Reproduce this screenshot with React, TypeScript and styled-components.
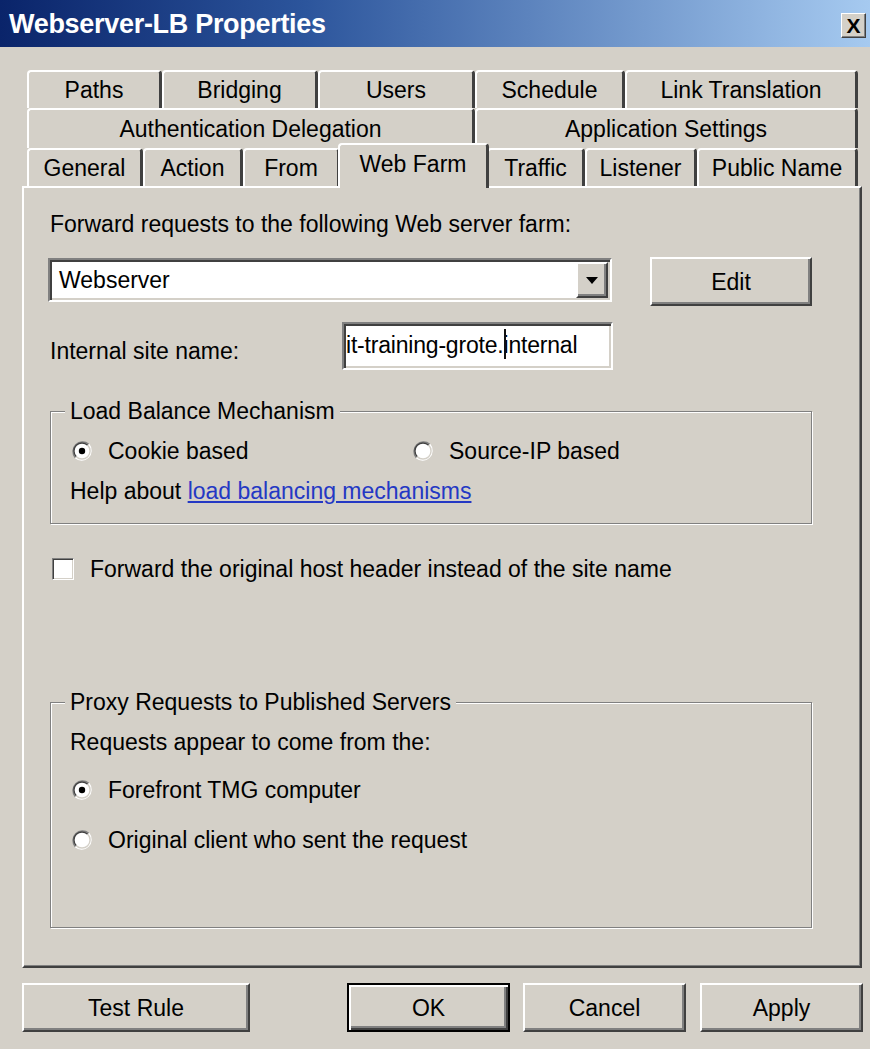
import React from "react";
import styled, { createGlobalStyle, css } from "styled-components";

const GlobalStyle = createGlobalStyle`
  html, body {
    margin: 0;
    padding: 0;
    background: #d4d0c8;
  }
  * { box-sizing: border-box; }
`;

const FACE = "#d4d0c8";
const SHADOW = "#808080";
const DARK = "#404040";

const Window = styled.div`
  width: 870px;
  height: 1049px;
  background: ${FACE};
  display: flex;
  flex-direction: column;
  font-family: "Liberation Sans", Arial, sans-serif;
  font-size: 23px;
  line-height: 26px;
  color: #000;
  overflow: hidden;
`;

const TitleBar = styled.div`
  height: 47px;
  flex: none;
  display: flex;
  align-items: center;
  justify-content: space-between;
  padding: 0 4px 0 9px;
  background: linear-gradient(90deg, #0a246a 0%, #2c559c 35%, #a6caf0 100%);
`;

const Title = styled.div`
  color: #fff;
  font-weight: bold;
  font-size: 27px;
  letter-spacing: -0.3px;
`;

const CloseButton = styled.div`
  width: 25px;
  height: 25px;
  background: ${FACE};
  border: 1px solid;
  border-color: #fff ${DARK} ${DARK} #fff;
  box-shadow: inset -1px -1px 0 ${SHADOW};
  display: flex;
  align-items: center;
  justify-content: center;
  font-weight: bold;
  font-size: 21px;
  line-height: 1;
  margin-top: 3px;
`;

const Body = styled.div`
  padding: 23px 8px 0 22px;
  display: flex;
  flex-direction: column;
`;

const TabStrip = styled.div`
  display: flex;
  flex-direction: column;
  padding-left: 5px;
`;

const TabRow = styled.div<{ $h: number }>`
  display: flex;
  height: ${(p) => p.$h}px;
`;

const Tab = styled.div<{ $w: number; $active?: boolean }>`
  flex: none;
  width: ${(p) => p.$w}px;
  display: flex;
  align-items: center;
  justify-content: center;
  background: ${FACE};
  border-top: 2px solid #fff;
  border-left: 2px solid #fff;
  border-right: 3px solid ${DARK};
  border-radius: 4px 4px 0 0;
  white-space: nowrap;
  ${(p) =>
    p.$active &&
    css`
      position: relative;
      z-index: 1;
      width: ${p.$w + 4}px;
      margin: -5px -2px -2px;
      padding-bottom: 6px;
    `}
`;

const Panel = styled.div`
  width: 840px;
  height: 782px;
  border: 2px solid;
  border-color: #fff ${DARK} ${DARK} #fff;
  box-shadow: inset -1px -1px 0 ${SHADOW};
  padding-left: 24px;
  display: flex;
  flex-direction: column;
`;

const Prompt = styled.div`
  margin-top: 23px;
  margin-left: 2px;
`;

const FarmRow = styled.div`
  margin-top: 21px;
  display: flex;
  align-items: flex-start;
`;

const sunken = css`
  border: 2px solid;
  border-color: ${SHADOW} #fff #fff ${SHADOW};
  box-shadow: inset 2px 2px 0 ${DARK}, inset -2px -2px 0 ${FACE};
  background: #fff;
`;

const Combo = styled.div`
  ${sunken};
  width: 564px;
  height: 44px;
  display: flex;
  align-items: stretch;
  padding: 2px;
`;

const ComboValue = styled.div`
  flex: 1;
  display: flex;
  align-items: center;
  padding-left: 7px;
`;

const raised = css`
  background: ${FACE};
  border: 2px solid;
  border-color: #fff ${DARK} ${DARK} #fff;
  box-shadow: inset -2px -2px 0 ${SHADOW};
`;

const DropButton = styled.div`
  ${raised};
  width: 32px;
  display: flex;
  align-items: center;
  justify-content: center;
`;

const PushButton = styled.div<{ $w: number; $default?: boolean }>`
  ${raised};
  width: ${(p) => p.$w}px;
  height: 49px;
  flex: none;
  display: flex;
  align-items: center;
  justify-content: center;
  ${(p) =>
    p.$default &&
    css`
      border-color: #000;
      box-shadow: inset 2px 2px 0 #fff, inset -2px -2px 0 ${DARK},
        inset -4px -4px 0 ${SHADOW};
    `}
`;

const EditButton = styled(PushButton)`
  margin-left: 38px;
  margin-top: -1px;
`;

const SiteRow = styled.div`
  margin-top: 16px;
  display: flex;
  align-items: flex-start;
`;

const SiteLabel = styled.div`
  width: 294px;
  margin-top: 16px;
  padding-left: 2px;
`;

const TextField = styled.div`
  ${sunken};
  width: 271px;
  height: 48px;
  display: flex;
  align-items: center;
  padding: 0 0 3px 2px;
  font-size: 23px;
  letter-spacing: -0.2px;
  white-space: nowrap;
  overflow: hidden;
`;

/* mouse I-beam resting over the text */
const Beam = styled.span`
  position: relative;
  &::after {
    content: "";
    position: absolute;
    left: 1px;
    top: -3px;
    width: 2px;
    height: 30px;
    background: #111;
  }
`;

const Group = styled.fieldset<{ $top: number; $h: number }>`
  margin: ${(p) => p.$top}px 0 0 2px;
  width: 762px;
  height: ${(p) => p.$h}px;
  padding: 14px 20px 0 21px;
  border: 1px solid ${SHADOW};
  box-shadow: inset 1px 1px 0 #fff, 1px 1px 0 #fff;
  display: flex;
  flex-direction: column;
  min-width: 0;
`;

const Legend = styled.legend`
  margin-left: -7px;
  padding: 0 5px;
  background: ${FACE};
  line-height: 26px;
`;

const OptionGrid = styled.div`
  display: grid;
  grid-template-columns: 341px auto;
`;

const Option = styled.div`
  display: flex;
  align-items: center;
  gap: 16px;
  height: 26px;
`;

const StackedOptions = styled.div`
  display: flex;
  flex-direction: column;
  gap: 24px;
  margin-top: 22px;
`;

const HelpLine = styled.div`
  margin-top: 14px;
  margin-left: -2px;
`;

const GroupText = styled.div`
  margin-left: -2px;
`;

const Link = styled.a`
  color: #2438c4;
  text-decoration: underline;
  cursor: pointer;
`;

const CheckRow = styled.div`
  margin-top: 32px;
  margin-left: 4px;
  display: flex;
  align-items: center;
  gap: 16px;
`;

const CheckBox = styled.div`
  width: 22px;
  height: 22px;
  flex: none;
  background: #fff;
  border: 1px solid;
  border-color: ${SHADOW} #fff #fff ${SHADOW};
  box-shadow: inset 1px 1px 0 ${DARK}, inset -1px -1px 0 ${FACE};
`;

const ButtonBar = styled.div`
  margin-top: 15px;
  display: flex;
  align-items: center;
`;

const Spacer = styled.div<{ $w: number }>`
  width: ${(p) => p.$w}px;
  flex: none;
`;

function Radio({ checked }: { checked?: boolean }) {
  return (
    <svg width="20" height="20" viewBox="0 0 20 20" style={{ flex: "none" }}>
      <circle cx="10" cy="10" r="9" fill="#fff" />
      <path d="M3.3 16.7 A9.5 9.5 0 0 1 16.7 3.3" stroke={SHADOW} strokeWidth="1.4" fill="none" />
      <path d="M16.7 3.3 A9.5 9.5 0 0 1 3.3 16.7" stroke="#fff" strokeWidth="1.4" fill="none" />
      <path d="M4.3 15.7 A8 8 0 0 1 15.7 4.3" stroke={DARK} strokeWidth="1.4" fill="none" />
      <path d="M15.7 4.3 A8 8 0 0 1 4.3 15.7" stroke={FACE} strokeWidth="1.4" fill="none" />
      {checked && <circle cx="10" cy="10" r="3.2" fill="#000" />}
    </svg>
  );
}

const tabRows: { h: number; tabs: { label: string; w: number; active?: boolean }[] }[] = [
  {
    h: 38,
    tabs: [
      { label: "Paths", w: 135 },
      { label: "Bridging", w: 156 },
      { label: "Users", w: 157 },
      { label: "Schedule", w: 150 },
      { label: "Link Translation", w: 233 },
    ],
  },
  {
    h: 40,
    tabs: [
      { label: "Authentication Delegation", w: 448 },
      { label: "Application Settings", w: 383 },
    ],
  },
  {
    h: 38,
    tabs: [
      { label: "General", w: 116 },
      { label: "Action", w: 100 },
      { label: "From", w: 97 },
      { label: "Web Farm", w: 147, active: true },
      { label: "Traffic", w: 98 },
      { label: "Listener", w: 112 },
      { label: "Public Name", w: 161 },
    ],
  },
];

export default function App() {
  return (
    <>
      <GlobalStyle />
      <Window>
        <TitleBar>
          <Title>Webserver-LB Properties</Title>
          <CloseButton>X</CloseButton>
        </TitleBar>
        <Body>
          <TabStrip>
            {tabRows.map((row, i) => (
              <TabRow key={i} $h={row.h}>
                {row.tabs.map((t) => (
                  <Tab key={t.label} $w={t.w} $active={t.active}>
                    {t.label}
                  </Tab>
                ))}
              </TabRow>
            ))}
          </TabStrip>
          <Panel>
            <Prompt>Forward requests to the following Web server farm:</Prompt>
            <FarmRow>
              <Combo>
                <ComboValue>Webserver</ComboValue>
                <DropButton>
                  <svg width="12" height="7" viewBox="0 0 12 7">
                    <path d="M0 0 H12 L6 7 Z" fill="#000" />
                  </svg>
                </DropButton>
              </Combo>
              <EditButton $w={162}>Edit</EditButton>
            </FarmRow>
            <SiteRow>
              <SiteLabel>Internal site name:</SiteLabel>
              <TextField>
                it-training-grote.<Beam>i</Beam>nternal
              </TextField>
            </SiteRow>
            <Group $top={28} $h={126}>
              <Legend>Load Balance Mechanism</Legend>
              <OptionGrid>
                <Option>
                  <Radio checked />
                  Cookie based
                </Option>
                <Option>
                  <Radio />
                  Source-IP based
                </Option>
              </OptionGrid>
              <HelpLine>
                Help about <Link>load balancing mechanisms</Link>
              </HelpLine>
            </Group>
            <CheckRow>
              <CheckBox />
              Forward the original host header instead of the site name
            </CheckRow>
            <Group $top={107} $h={239}>
              <Legend>Proxy Requests to Published Servers</Legend>
              <GroupText>Requests appear to come from the:</GroupText>
              <StackedOptions>
                <Option>
                  <Radio checked />
                  Forefront TMG computer
                </Option>
                <Option>
                  <Radio />
                  Original client who sent the request
                </Option>
              </StackedOptions>
            </Group>
          </Panel>
          <ButtonBar>
            <PushButton $w={228}>Test Rule</PushButton>
            <Spacer $w={97} />
            <PushButton $w={163} $default>
              OK
            </PushButton>
            <Spacer $w={13} />
            <PushButton $w={163}>Cancel</PushButton>
            <Spacer $w={14} />
            <PushButton $w={163}>Apply</PushButton>
          </ButtonBar>
        </Body>
      </Window>
    </>
  );
}
